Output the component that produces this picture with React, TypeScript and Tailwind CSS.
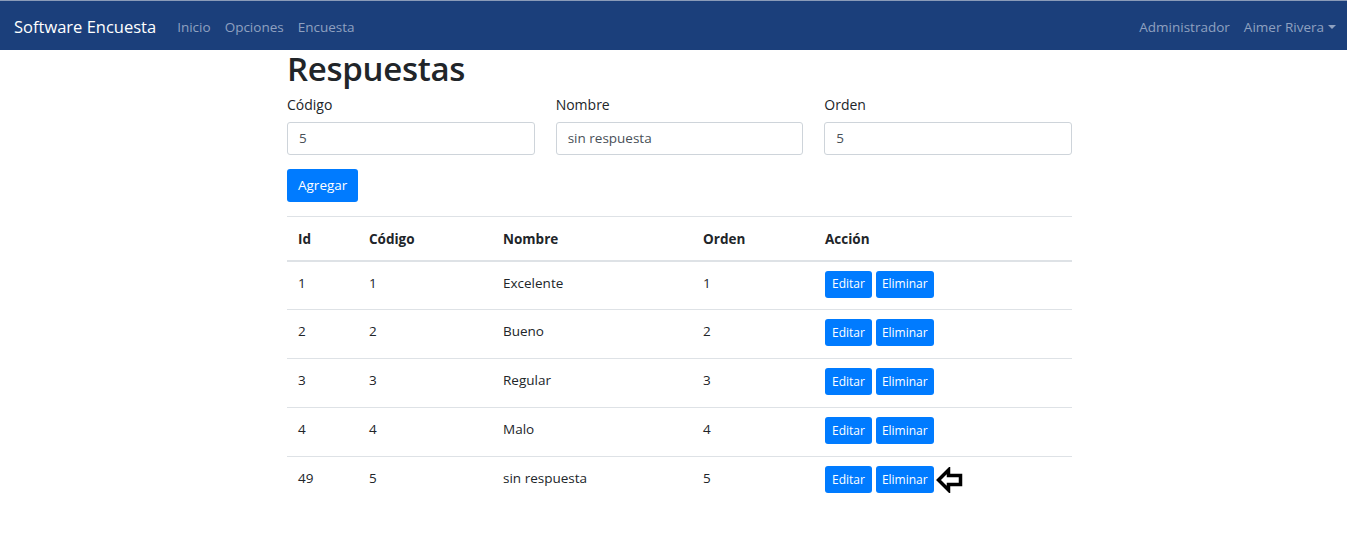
import React from 'react';

const rows = [
  { id: 1, codigo: 1, nombre: 'Excelente', orden: 1 },
  { id: 2, codigo: 2, nombre: 'Bueno', orden: 2 },
  { id: 3, codigo: 3, nombre: 'Regular', orden: 3 },
  { id: 4, codigo: 4, nombre: 'Malo', orden: 4 },
  { id: 49, codigo: 5, nombre: 'sin respuesta', orden: 5 },
];

function ArrowLeft() {
  return (
    <svg width="27" height="26" viewBox="0 0 27 26" className="ml-[2px] mt-[1px]">
      <polygon
        points="2.5,13 12.5,3 12.5,8.5 24.5,8.5 24.5,17.5 12.5,17.5 12.5,23"
        fill="white"
        stroke="black"
        strokeWidth="3.5"
        strokeLinejoin="miter"
      />
    </svg>
  );
}

function Field({ label, value }: { label: string; value: string }) {
  return (
    <div className="flex flex-col">
      <label className="h-[19px] text-[14px] leading-[19px] text-[#212529]">{label}</label>
      <div className="mt-[8px] flex h-[33px] items-center rounded-[3px] border border-[#ced4da] px-[11px] text-[13.5px] text-[#495057]">
        {value}
      </div>
    </div>
  );
}

export default function App() {
  return (
    <div className="min-h-[536px] bg-white font-['Open_Sans',sans-serif] text-[#212529]">
      {/* Navbar */}
      <nav className="flex h-[50px] items-center justify-between border-t border-[#8a9bb8] bg-[#1b3f7b] pl-[14px] pr-[11px] pt-[3px]">
        <div className="flex items-center">
          <span className="text-[16.5px] text-white">Software Encuesta</span>
          <div className="ml-[21px] flex gap-[14px] text-[13.5px] text-[#8fa1c0]">
            <span>Inicio</span>
            <span>Opciones</span>
            <span>Encuesta</span>
          </div>
        </div>
        <div className="flex items-center gap-[14px] text-[13.5px] text-[#8fa1c0]">
          <span>Administrador</span>
          <span className="flex items-center">
            Aimer Rivera
            <span className="ml-[4px] inline-block h-0 w-0 border-x-[4px] border-t-[4px] border-x-transparent border-t-[#8fa1c0]" />
          </span>
        </div>
      </nav>

      <div className="mx-auto w-[797px] pl-[12px]">
        <h1 className="h-[45px] text-[33px] leading-[38px] font-semibold tracking-[-0.3px]">Respuestas</h1>

        <div className="grid grid-cols-3 gap-x-[21px]">
          <Field label="Código" value="5" />
          <Field label="Nombre" value="sin respuesta" />
          <Field label="Orden" value="5" />
        </div>

        <button className="mt-[14px] h-[33px] rounded-[3px] bg-[#007bff] px-[11px] text-[13.5px] text-white">
          Agregar
        </button>

        <table className="mt-[14px] w-full border-collapse text-[13.5px] leading-[20px]">
          <thead>
            <tr className="h-[44px] border-t border-b-2 border-t-[#dee2e6] border-b-[#dee2e6] text-left">
              <th className="w-[71px] pl-[11px] pt-[1px] font-bold">Id</th>
              <th className="w-[134px] pl-[11px] pt-[1px] font-bold">Código</th>
              <th className="w-[200px] pl-[11px] pt-[1px] font-bold">Nombre</th>
              <th className="w-[122px] pl-[11px] pt-[1px] font-bold">Orden</th>
              <th className="pl-[11px] pt-[1px] font-bold">Acción</th>
            </tr>
          </thead>
          <tbody>
            {rows.map((r, i) => (
              <tr
                key={r.id}
                className={`h-[49px] ${i > 0 ? 'border-t border-[#dee2e6]' : ''}`}
              >
                <td className="pl-[11px] pt-[11px] align-top">{r.id}</td>
                <td className="pl-[11px] pt-[11px] align-top">{r.codigo}</td>
                <td className="pl-[11px] pt-[11px] align-top">{r.nombre}</td>
                <td className="pl-[11px] pt-[11px] align-top">{r.orden}</td>
                <td className="pl-[11px] pt-[9px] align-top">
                  <div className="flex items-start">
                    <button className="h-[27px] rounded-[3px] bg-[#007bff] px-[7px] text-[12px] text-white">
                      Editar
                    </button>
                    <button className="ml-[4px] h-[27px] rounded-[3px] bg-[#007bff] px-[6px] text-[12px] text-white">
                      Eliminar
                    </button>
                    {i === rows.length - 1 && <ArrowLeft />}
                  </div>
                </td>
              </tr>
            ))}
          </tbody>
        </table>
      </div>
    </div>
  );
}
